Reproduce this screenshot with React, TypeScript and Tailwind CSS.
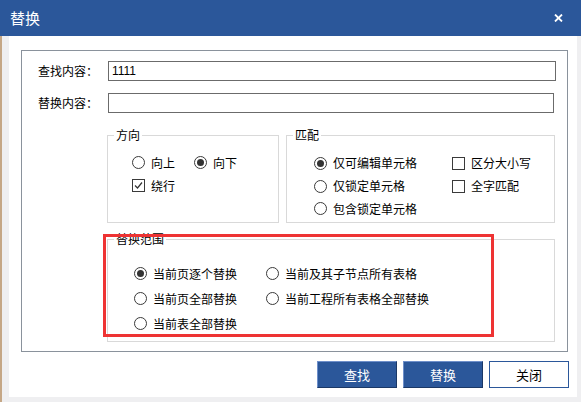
import React from 'react';

const font = { fontFamily: '"Noto Sans CJK SC", "Noto Sans", sans-serif' };

function Radio({ checked, label, className = '' }: { checked?: boolean; label: string; className?: string }) {
  return (
    <div className={`flex items-center gap-[6px] ${className}`}>
      <span className="w-[13px] h-[13px] rounded-full border border-[#3a3a3a] bg-white flex items-center justify-center shrink-0">
        {checked && <span className="w-[7px] h-[7px] rounded-full bg-[#333]" />}
      </span>
      <span className="whitespace-nowrap">{label}</span>
    </div>
  );
}

function Check({ checked, label, className = '' }: { checked?: boolean; label: string; className?: string }) {
  return (
    <div className={`flex items-center gap-[6px] ${className}`}>
      <span className="w-[13px] h-[13px] border border-[#3a3a3a] bg-white flex items-center justify-center shrink-0">
        {checked && (
          <svg width="9" height="9" viewBox="0 0 9 9">
            <polyline points="1,4.5 3.5,7 8,1.5" fill="none" stroke="#333" strokeWidth="1.2" />
          </svg>
        )}
      </span>
      <span className="whitespace-nowrap">{label}</span>
    </div>
  );
}

function Group({ title, className = '', children }: { title: string; className?: string; children: React.ReactNode }) {
  return (
    <div className={`relative border border-[#d9d9d9] ${className}`}>
      <span className="absolute -top-[9px] left-[6px] bg-white px-[2px] leading-[16px]">{title}</span>
      {children}
    </div>
  );
}

export default function App() {
  return (
    <div className="w-[581px] h-[402px] bg-[#efeff1] flex flex-col text-[12px] text-black overflow-hidden" style={font}>
      {/* Title bar */}
      <div className="h-[36px] bg-[#2b579a] flex items-center justify-between pl-[10px] pr-[18px] text-white shrink-0">
        <span className="text-[15px]">替换</span>
        <svg width="9" height="8" viewBox="0 0 9 8">
          <path d="M1 0.5 L8 7.5 M8 0.5 L1 7.5" stroke="white" strokeWidth="1.8" />
        </svg>
      </div>

      <div className="flex flex-1">
        <div className="w-[2px] bg-[#c5a786]" />
        <div className="w-[7px]" />
        <div className="w-[568px] h-[361px] bg-white flex flex-col">
          {/* Outer box */}
          <div className="relative mt-[14px] ml-[12px] w-[547px] h-[302px] border border-[#8a929c]">
            <div className="flex items-center mt-[10px] h-[20px]">
              <span className="w-[86px] pl-[16px]">查找内容：</span>
              <div className="w-[448px] h-[20px] border border-[#6b6b6b] flex items-center pl-[3px] text-[12px]" style={{ fontFamily: '"Liberation Sans", Arial, sans-serif' }}>
                1111
              </div>
            </div>
            <div className="flex items-center mt-[12px] h-[20px]">
              <span className="w-[86px] pl-[16px]">替换内容：</span>
              <div className="w-[446px] h-[20px] border border-[#6b6b6b]" />
            </div>

            <div className="flex mt-[22px] ml-[85px] gap-[7px]">
              <Group title="方向" className="w-[172px] h-[88px]">
                <div className="pt-[15px] pl-[24px]">
                  <div className="flex h-[23px] items-center">
                    <Radio label="向上" className="w-[62px]" />
                    <Radio label="向下" checked />
                  </div>
                  <div className="flex h-[23px] items-center">
                    <Check label="绕行" checked />
                  </div>
                </div>
              </Group>
              <Group title="匹配" className="w-[269px] h-[88px]">
                <div className="pt-[15px] pl-[27px] flex">
                  <div className="w-[138px]">
                    <Radio label="仅可编辑单元格" checked className="h-[24px]" />
                    <Radio label="仅锁定单元格" className="h-[22px]" />
                    <Radio label="包含锁定单元格" className="h-[23px]" />
                  </div>
                  <div>
                    <Check label="区分大小写" className="h-[24px]" />
                    <Check label="全字匹配" className="h-[22px]" />
                  </div>
                </div>
              </Group>
            </div>

            <Group title="替换范围" className="mt-[16px] ml-[85px] w-[448px] h-[103px]">
              <div className="pt-[21px] pl-[26px] grid grid-cols-[132px_auto]">
                <Radio label="当前页逐个替换" checked className="h-[25px]" />
                <Radio label="当前及其子节点所有表格" className="h-[25px]" />
                <Radio label="当前页全部替换" className="h-[25px]" />
                <Radio label="当前工程所有表格全部替换" className="h-[25px]" />
                <Radio label="当前表全部替换" className="h-[25px]" />
              </div>
            </Group>

            {/* red annotation */}
            <div className="absolute left-[81px] top-[183px] w-[391px] h-[103px] border-[3px] border-[#ee3333] pointer-events-none" />
          </div>

          {/* Buttons */}
          <div className="flex justify-end gap-[6px] mt-[9px] mr-[8px]">
            <button className="w-[80px] h-[27px] bg-[#2b579a] text-white text-[13px] border-t border-l border-[#6e8fca] border-b border-r border-b-[#1b3866] border-r-[#1b3866]">查找</button>
            <button className="w-[80px] h-[27px] bg-[#2b579a] text-white text-[13px] border-t border-l border-[#6e8fca] border-b border-r border-b-[#1b3866] border-r-[#1b3866]">替换</button>
            <button className="w-[80px] h-[27px] bg-white text-black text-[13px] border border-[#2b579a]">关闭</button>
          </div>
        </div>
      </div>
    </div>
  );
}
